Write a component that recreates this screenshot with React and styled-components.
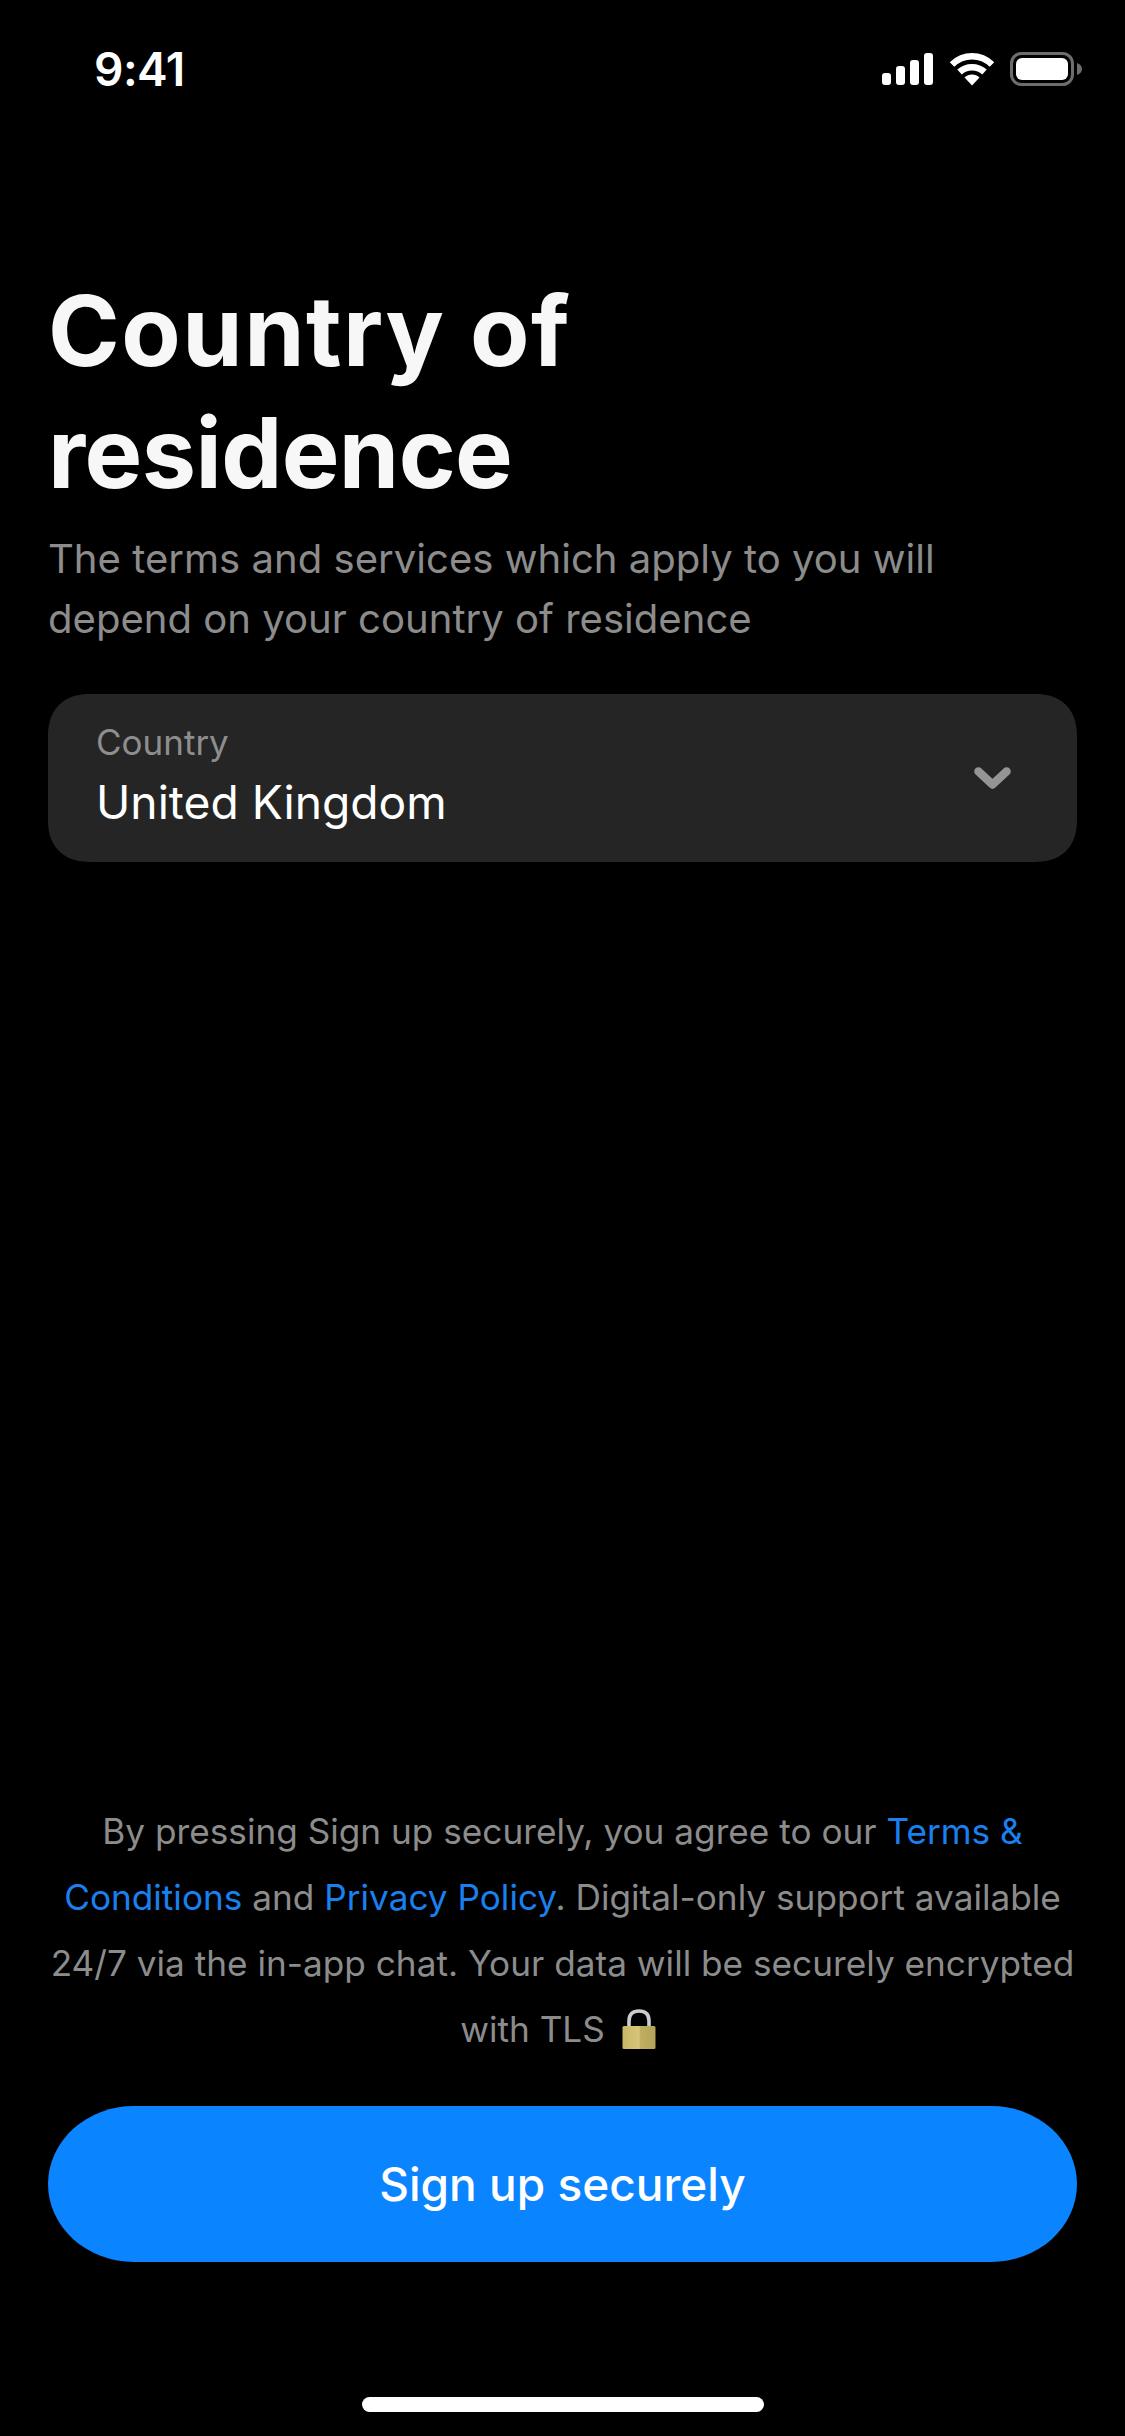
import React from 'react';
import styled, { createGlobalStyle } from 'styled-components';

const GlobalStyle = createGlobalStyle`
  html, body {
    margin: 0;
    padding: 0;
    background: #000;
  }
  * {
    box-sizing: border-box;
  }
`;

//--------------------------STYLING-------------------------//
const Screen = styled.div`
  display: flex;
  flex-direction: column;
  width: 1125px;
  height: 2436px;
  background: #000;
  color: #fff;
  font-family: Inter, 'Liberation Sans', sans-serif;
  overflow: hidden;
`;
const StatusBar = styled.div`
  display: flex;
  justify-content: space-between;
  align-items: center;
  height: 34px;
  margin-top: 52px;
  padding: 0 43px 0 94px;
`;
const Time = styled.span`
  font-size: 46px;
  line-height: 34px;
  font-weight: 600;
  letter-spacing: -0.5px;
`;
const StatusIcons = styled.div`
  display: flex;
  align-items: center;
  gap: 15.5px;
`;
const Content = styled.main`
  display: flex;
  flex-direction: column;
  flex: 1;
  padding: 184px 48px 0;
`;
const Title = styled.h1`
  margin: 0;
  font-size: 97px;
  line-height: 122px;
  font-weight: 700;
  color: #f7f7f7;
`;
const TitleLine = styled.span`
  display: block;
  letter-spacing: ${props => props.$spacing};
`;
const Subtitle = styled.p`
  margin: 15px 0 0;
  font-size: 40.1px;
  line-height: 60px;
  font-weight: 400;
  color: #8c8c8c;
`;
const Select = styled.div`
  display: flex;
  justify-content: space-between;
  align-items: center;
  height: 168px;
  margin-top: 45px;
  padding: 0 66px 0 48px;
  background: #252525;
  border-radius: 42px;
  corner-shape: superellipse(1.2);
`;
const SelectText = styled.div`
  display: flex;
  flex-direction: column;
  gap: 10px;
  padding-bottom: 7px;
`;
const SelectLabel = styled.span`
  font-size: 35px;
  line-height: 44px;
  color: #8e8e8e;
`;
const SelectValue = styled.span`
  font-size: 46.2px;
  line-height: 56px;
  color: #fff;
`;
const Legal = styled.p`
  margin: auto 0 0;
  font-size: 35.2px;
  line-height: 66px;
  text-align: center;
  color: #8c8c8c;
`;
const Link = styled.span`
  color: #1a80f0;
`;
const SignUpButton = styled.button`
  display: block;
  width: 100%;
  height: 156px;
  margin-top: 44px;
  padding: 0;
  border: none;
  border-radius: 86px / 78px;
  background: #0a84ff;
  color: #fff;
  font-family: inherit;
  font-size: 46px;
  font-weight: 500;
`;
const HomeBarRow = styled.div`
  display: flex;
  justify-content: center;
  padding: 135px 0 24px;
`;
const HomeBar = styled.div`
  width: 402px;
  height: 15px;
  border-radius: 8px;
  background: #fff;
`;

//----------------------------- ICONS --------------------------------//
const SignalIcon = () => (
  <svg width="51" height="32" viewBox="0 0 51 32" fill="#fff">
    <rect x="0" y="20" width="9" height="12" rx="3" />
    <rect x="14" y="13" width="9" height="19" rx="3" />
    <rect x="28" y="7" width="9" height="25" rx="3" />
    <rect x="42" y="0" width="9" height="32" rx="3" />
  </svg>
);

const WifiIcon = () => (
  <svg width="46" height="33" viewBox="0 0 46 33" fill="none" stroke="#fff" strokeWidth="6.5">
    <path d="M3 11.5C14.5 0.5 31.5 0.5 43 11.5" />
    <path d="M10.5 19C17.5 12.5 28.5 12.5 35.5 19" />
    <path d="M15.5 24.5L23 32.5L30.5 24.5C26.5 20.5 19.5 20.5 15.5 24.5Z" fill="#fff" stroke="none" />
  </svg>
);

const BatteryIcon = () => (
  <svg width="72" height="34" viewBox="0 0 72 34">
    <rect x="1.5" y="1.5" width="61" height="31" rx="10" fill="none" stroke="#6d6d6d" strokeWidth="3" />
    <rect x="6" y="6" width="52" height="22" rx="6" fill="#fff" />
    <path d="M67 11C70 12 72 14 72 17C72 20 70 22 67 23Z" fill="#6d6d6d" />
  </svg>
);

const ChevronIcon = () => (
  <svg width="37" height="22" viewBox="0 0 37 22" fill="none" stroke="#959595" strokeWidth="8.5" strokeLinecap="round" strokeLinejoin="round">
    <path d="M4.5 4.5L18.5 17.5L32.5 4.5" />
  </svg>
);

const LockSvg = styled.svg`
  display: inline-block;
  margin: 0 9px 0 17px;
  vertical-align: -7px;
`;

const LockIcon = () => (
  <LockSvg width="34" height="40" viewBox="0 0 34 40">
    <defs>
      <linearGradient id="lockBody" x1="0" x2="1" y1="0" y2="0">
        <stop offset="0" stopColor="#c8b766" />
        <stop offset="0.5" stopColor="#d6c67c" />
        <stop offset="0.55" stopColor="#bfae62" />
        <stop offset="1" stopColor="#b3a359" />
      </linearGradient>
    </defs>
    <path d="M7 18V12C7 5 11 2 17 2C23 2 27 5 27 12V18" fill="none" stroke="#c9ccd0" strokeWidth="3.6" />
    <rect x="0.5" y="17" width="33" height="23" rx="1.5" fill="url(#lockBody)" />
  </LockSvg>
);

//----------------------------- PAGE --------------------------------//
const App = () => {
  return (
    <Screen>
      <GlobalStyle />
      <StatusBar>
        <Time>9:41</Time>
        <StatusIcons>
          <SignalIcon />
          <WifiIcon />
          <BatteryIcon />
        </StatusIcons>
      </StatusBar>

      <Content>
        <Title>
          <TitleLine $spacing="1.5px">Country of</TitleLine>
          <TitleLine $spacing="-0.6px">residence</TitleLine>
        </Title>
        <Subtitle>
          The terms and services which apply to you will
          <br />
          depend on your country of residence
        </Subtitle>

        <Select>
          <SelectText>
            <SelectLabel>Country</SelectLabel>
            <SelectValue>United Kingdom</SelectValue>
          </SelectText>
          <ChevronIcon />
        </Select>

        <Legal>
          By pressing Sign up securely, you agree to our <Link>Terms &amp;</Link>
          <br />
          <Link>Conditions</Link> and <Link>Privacy Policy</Link>. Digital-only support available
          <br />
          24/7 via the in-app chat. Your data will be securely encrypted
          <br />
          with TLS
          <LockIcon />
        </Legal>

        <SignUpButton>Sign up securely</SignUpButton>
      </Content>

      <HomeBarRow>
        <HomeBar />
      </HomeBarRow>
    </Screen>
  );
};

export default App;
